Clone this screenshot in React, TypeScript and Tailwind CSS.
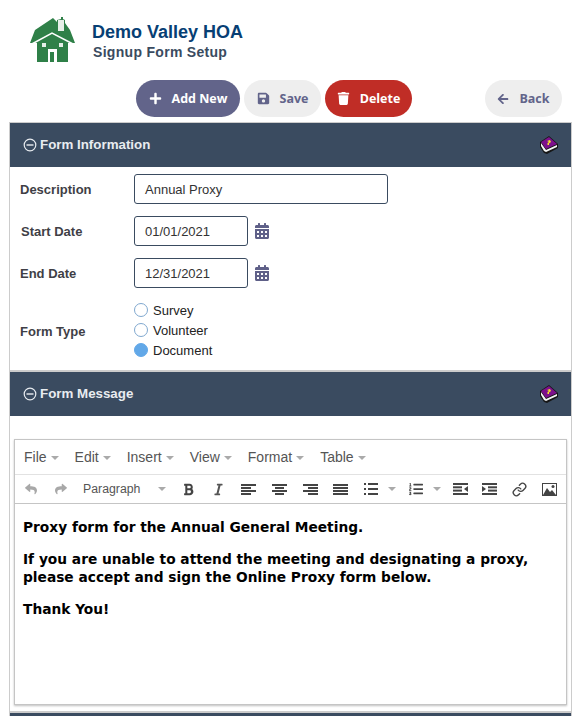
import { FaPlus, FaSave, FaTrash, FaArrowLeft, FaCalendarAlt, FaReply, FaShare, FaBold, FaItalic, FaListOl } from "react-icons/fa";
import { Link } from "lucide-react";
import type { ReactNode } from "react";

const arial = "font-['Liberation_Sans',Arial,sans-serif]";

function HouseLogo() {
  return (
    <svg width="48" height="48" viewBox="0 0 48 48" className="shrink-0">
      <path fill="#2f8048" d="M1 28 L6 15 L24 3 L28 7 L28 5 L32 4 L32 2 L34 2 L34 4 L36 5 L36 8 L41 15 L46 28 Z" />
      <path fill="#2f8048" d="M8 28 L39 28 L39 47 L8 47 Z" />
      <path fill="none" stroke="#fff" strokeWidth="1.500" d="M1 30 L23 18 L46 30" />
      <rect x="29" y="5" width="6" height="11" fill="#e6efe8" />
      <rect x="13" y="28" width="4" height="4" fill="#e6efe8" />
      <rect x="30" y="28" width="4" height="4" fill="#e6efe8" />
      <path fill="#fff" d="M19 34 H28 V47 H25 V37 H21 V47 H19 Z" />
    </svg>
  );
}

function BookIcon() {
  return (
    <svg width="20" height="20" viewBox="0 0 20 20" className="-mr-[1px]">
      <path fill="#161616" d="M1 7 L10 1 L19 9 L19 13 L8 19 L5 18 L1 12 Z" />
      <path fill="#f4f4f4" d="M2 8 L7 15 L18 10 L18 12 L7 17 L5 16 L2 11 Z" />
      <path fill="#7d108c" d="M2 7 L10 2 L18 9 L7 14 Z" />
      <path fill="#f5e02c" d="M8 6 L11 5 L12 7 L10 8.500 L10 10 L8.500 10 L8.500 8 L10 7 Z" />
    </svg>
  );
}

function MinusCircle() {
  return (
    <svg width="14" height="14" viewBox="0 0 14 14" className="shrink-0">
      <circle cx="7" cy="7" r="5.800" fill="none" stroke="#e8ecf0" strokeWidth="1.200" />
      <rect x="3.500" y="6.300" width="7" height="1.400" fill="#e8ecf0" />
    </svg>
  );
}

function PillButton({ className, icon, label }: { className: string; icon: ReactNode; label: string }) {
  return (
    <button className={`flex h-[37px] items-center justify-center gap-[10px] rounded-[19px] font-['Open_Sans',sans-serif] text-[12.5px] font-bold ${className}`}>
      {icon}
      <span className="mt-[1px]">{label}</span>
    </button>
  );
}

function PanelHeader({ title }: { title: string }) {
  return (
    <div className="flex h-[44px] items-center justify-between bg-[#3a4b60] pl-[13px] pr-[13px]">
      <div className={`flex items-center gap-[3px] text-[13.33px] font-bold text-[#e8ecf0] ${arial}`}>
        <MinusCircle />
        {title}
      </div>
      <BookIcon />
    </div>
  );
}

function DateField({ label, value, labelClass }: { label: string; value: string; labelClass: string }) {
  return (
    <div className="flex h-[30px] items-center">
      <div className={`w-[114px] pt-[1px] text-[13px] font-bold text-[#3f3f46] ${labelClass}`}>{label}</div>
      <div className="flex h-[30px] w-[114px] items-center rounded-[3px] border border-[#3a4b60] pl-[10px] pt-[1px] text-[13px] text-[#333]">{value}</div>
      <FaCalendarAlt className="ml-[6px] text-[#5f6088]" size={16} />
    </div>
  );
}

function Radio({ label, checked }: { label: string; checked?: boolean }) {
  return (
    <div className="flex h-[20px] items-center gap-[5px] text-[13px] leading-none text-[#222]">
      <span className={`h-[14px] w-[14px] rounded-full border ${checked ? "border-[#62a8e8] bg-[#62a8e8]" : "border-[#7fa8cf] bg-white"}`} />
      {label}
    </div>
  );
}

function MenuItem({ label }: { label: string }) {
  return (
    <div className="flex items-center gap-[4px] text-[14px] text-[#555]">
      {label}
      <span className="mt-[2px] h-0 w-0 border-x-[4px] border-t-[4px] border-x-transparent border-t-[#aaa]" />
    </div>
  );
}

function Caret({ className = "" }: { className?: string }) {
  return <span className={`h-0 w-0 border-x-[4px] border-t-[4px] border-x-transparent border-t-[#aaa] ${className}`} />;
}

// rows of the align glyphs, as [x, width] per line
function Lines({ rows }: { rows: [number, number][] }) {
  return (
    <svg width="16" height="13" viewBox="0 0 16 13">
      {rows.map(([x, w], i) => (
        <rect key={i} x={x} y={i * 3 + 1} width={w} height="2" fill="#444" />
      ))}
    </svg>
  );
}

function BulletList() {
  return (
    <svg width="14" height="12" viewBox="0 0 14 12">
      {[0, 5, 10].map((y) => (
        <g key={y} fill="#444">
          <rect x="0" y={y} width="2" height="2" />
          <rect x="4" y={y} width="10" height="2" />
        </g>
      ))}
    </svg>
  );
}

function Indent({ flip }: { flip?: boolean }) {
  return (
    <svg width="15" height="12" viewBox="0 0 15 12" className={flip ? "-scale-x-100" : ""}>
      <g fill="#444">
        <rect x="0" y="0" width="15" height="2" />
        <rect x="6" y="3.300" width="9" height="2" />
        <rect x="6" y="6.600" width="9" height="2" />
        <rect x="0" y="10" width="15" height="2" />
        <path d="M0 3 L4 6 L0 9 Z" />
      </g>
    </svg>
  );
}

function ImageGlyph() {
  return (
    <svg width="15" height="13" viewBox="0 0 15 13">
      <rect x="0.500" y="0.500" width="14" height="12" fill="#fff" stroke="#444" />
      <path fill="#444" d="M1 12 L5 5 L8 9 L10 7 L14 12 Z" />
      <circle cx="11" cy="3.500" r="1.500" fill="#444" />
    </svg>
  );
}

export default function App() {
  return (
    <div className={`h-[716px] w-[584px] overflow-hidden bg-white ${arial}`}>
      <div className="flex h-[80px] items-start pl-[29px] pt-[15px]">
        <HouseLogo />
        <div className="ml-[15px] pt-[6px]">
          <div className="text-[18px] font-bold leading-[22px] text-[#073f74]">Demo Valley HOA</div>
          <div className="pl-[1px] text-[14px] font-bold leading-[18px] tracking-[0.3px] text-[#3a4b60]">Signup Form Setup</div>
        </div>
      </div>

      <div className="flex h-[42px] items-start pl-[136px]">
        <PillButton className="w-[104px] bg-[#62648a] text-white" icon={<FaPlus size={13} />} label="Add New" />
        <PillButton className="ml-[4px] w-[77px] bg-[#eeeeee] text-[#62648a]" icon={<FaSave size={13} />} label="Save" />
        <PillButton className="ml-[4px] w-[87px] bg-[#c02d26] text-white" icon={<FaTrash size={13} />} label="Delete" />
        <PillButton className="ml-[73px] w-[77px] bg-[#eeeeee] text-[#62648a]" icon={<FaArrowLeft size={12} />} label="Back" />
      </div>

      <div className="ml-[9px] mr-[12px] border-x border-t border-[#cccccc]">
        <PanelHeader title="Form Information" />
        <div className="border-b-2 border-[#cccccc] pl-[10px] pt-[7px]">
          <div className="flex h-[30px] items-center">
            <div className="w-[114px] pt-[1px] text-[13px] font-bold text-[#3f3f46]">Description</div>
            <div className="flex h-[30px] w-[254px] items-center rounded-[3px] border border-[#3a4b60] pl-[10px] pt-[1px] text-[13px] text-[#333]">Annual Proxy</div>
          </div>
          <div className="mt-[12px]">
            <DateField label="Start Date" value="01/01/2021" labelClass="pl-[1px]" />
          </div>
          <div className="mt-[12px]">
            <DateField label="End Date" value="12/31/2021" labelClass="" />
          </div>
          <div className="mt-[12px] flex items-center pb-[10px]">
            <div className="w-[114px] pt-[4px] text-[13px] font-bold text-[#3f3f46]">Form Type</div>
            <div className="flex flex-col">
              <Radio label="Survey" />
              <Radio label="Volunteer" />
              <Radio label="Document" checked />
            </div>
          </div>
        </div>

        <PanelHeader title="Form Message" />
        <div className="border-b-2 border-[#cccccc] px-[4px] pb-[6px] pt-[23px]">
          <div className="h-[266px] border border-[#c5c5c5] shadow-[0_1px_2px_rgba(0,0,0,0.25)]">
            <div className="flex h-[35px] items-center gap-[16px] border-b border-[#e2e2e2] pl-[9px]">
              {["File", "Edit", "Insert", "View", "Format", "Table"].map((m) => (
                <MenuItem key={m} label={m} />
              ))}
            </div>
            <div className="flex h-[29px] items-center border-b border-[#c5c5c5] pl-[10px] text-[#444]">
              <FaReply size={12} className="text-[#a8a8a8]" />
              <FaShare size={12} className="ml-[18px] text-[#a8a8a8]" />
              <span className="ml-[16px] w-[75px] text-[12.3px] text-[#555]">Paragraph</span>
              <Caret />
              <FaBold size={13} className="ml-[16px]" />
              <FaItalic size={13} className="ml-[17px] text-[#555]" />
              <span className="ml-[16px] flex"><Lines rows={[[0, 15], [0, 10], [0, 15], [0, 10]]} /></span>
              <span className="ml-[15px] flex"><Lines rows={[[0, 15], [3, 9], [0, 15], [3, 9]]} /></span>
              <span className="ml-[15px] flex"><Lines rows={[[0, 15], [5, 10], [0, 15], [5, 10]]} /></span>
              <span className="ml-[14px] flex"><Lines rows={[[0, 15], [0, 15], [0, 15], [0, 15]]} /></span>
              <span className="ml-[15px] flex"><BulletList /></span>
              <Caret className="ml-[10px]" />
              <FaListOl size={14} className="ml-[13px]" />
              <Caret className="ml-[10px]" />
              <span className="ml-[12px] flex"><Indent flip /></span>
              <span className="ml-[14px] flex"><Indent /></span>
              <Link size={15} strokeWidth={2.2} className="ml-[15px]" />
              <span className="ml-[15px] flex"><ImageGlyph /></span>
            </div>
            <div className="px-[8px] pt-[14px] font-['DejaVu_Sans',Verdana,sans-serif] text-[13.75px] font-bold leading-[18px] text-black">
              <p>Proxy form for the Annual General Meeting.</p>
              <p className="mt-[14px]">If you are unable to attend the meeting and designating a proxy, please accept and sign the Online Proxy form below.</p>
              <p className="mt-[14px]">Thank You!</p>
            </div>
          </div>
        </div>
        <div className="h-[8px] bg-[#3a4b60]" />
      </div>
    </div>
  );
}
